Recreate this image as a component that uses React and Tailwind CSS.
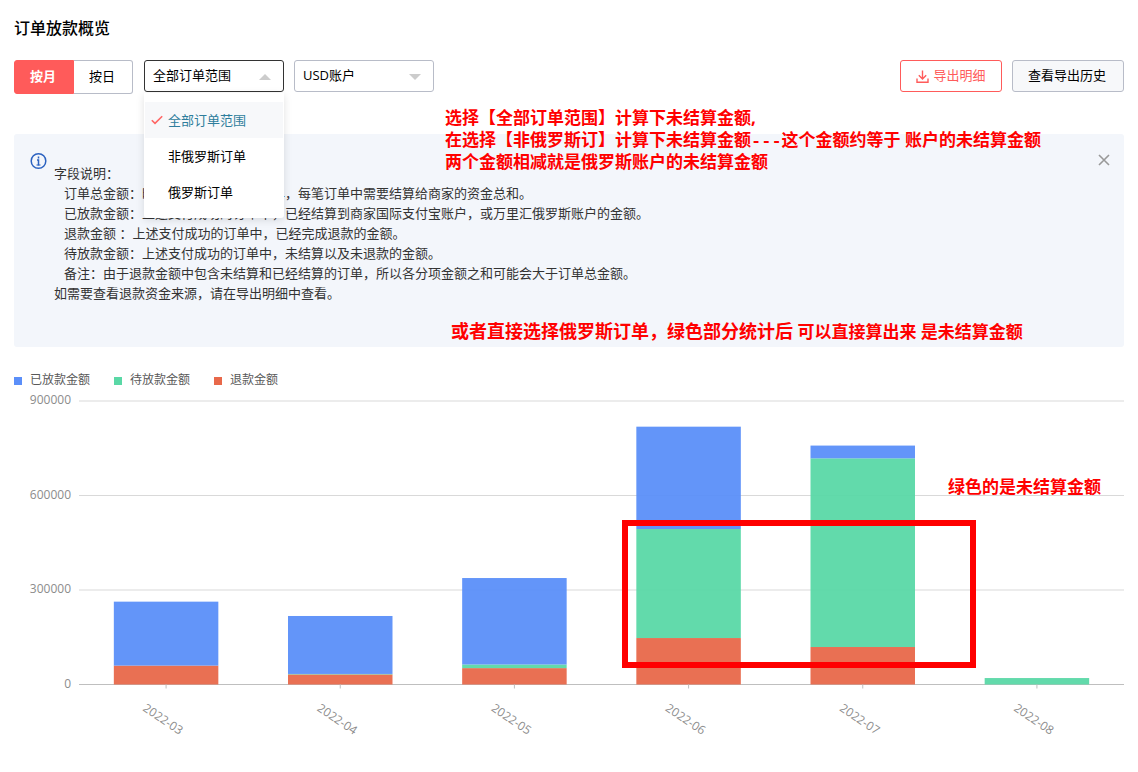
import { useState } from 'react';

const SERIES = [
    { key: 'paid', name: '已放款金额', color: '#5B8FF9' },
    { key: 'pending', name: '待放款金额', color: '#5AD8A6' },
    { key: 'refund', name: '退款金额', color: '#E8684A' },
];

const MONTHS = [
    { month: '2022-03', paid: 203000, pending: 0, refund: 60000 },
    { month: '2022-04', paid: 184000, pending: 1500, refund: 32000 },
    { month: '2022-05', paid: 274500, pending: 11500, refund: 52000 },
    { month: '2022-06', paid: 325000, pending: 346000, refund: 147500 },
    { month: '2022-07', paid: 40500, pending: 599000, refund: 119000 },
    { month: '2022-08', paid: 0, pending: 20500, refund: 0 },
];

const TICKS = [900000, 600000, 300000, 0];

const NOTES = [
    '订单总金额：时间段内支付成功的订单，每笔订单中需要结算给商家的资金总和。',
    '已放款金额：上述支付成功的订单中，已经结算到商家国际支付宝账户，或万里汇俄罗斯账户的金额。',
    '退款金额 ：上述支付成功的订单中，已经完成退款的金额。',
    '待放款金额：上述支付成功的订单中，未结算以及未退款的金额。',
    '备注：由于退款金额中包含未结算和已经结算的订单，所以各分项金额之和可能会大于订单总金额。',
];

const SCOPES = ['全部订单范围', '非俄罗斯订单', '俄罗斯订单'];

// Chart geometry: zero line at 292.5, 283.5px for 900000
const BASE_Y = 292.5;
const toHeight = (value) => (value / 900000) * 283.5;

function Caret({ up }) {
    return (
        <svg viewBox="0 0 12 6" className="pointer-events-none absolute right-[13px] top-3.5 h-1.5 w-3 fill-[#cccccc]" aria-hidden="true">
            <path d={up ? 'M0 6 6 0l6 6z' : 'M0 0h12L6 6z'} />
        </svg>
    );
}

function ScopeSelect() {
    const [scope, setScope] = useState(SCOPES[0]);

    return (
        <div className="relative w-[140px]">
            <select
                aria-label="订单范围"
                value={scope}
                onChange={(e) => setScope(e.target.value)}
                className="h-8 w-full appearance-none rounded-[3px] border border-[#333333] bg-white px-2 text-[13px] text-black"
            >
                {SCOPES.map((s) => <option key={s}>{s}</option>)}
            </select>
            <Caret up />
            <ul role="listbox" aria-label="订单范围" className="absolute left-0 top-full z-10 mt-px w-full rounded-b-[3px] bg-white px-px pb-2 pt-[9px] shadow-[0_2px_8px_rgba(0,0,0,0.12)]">
                {SCOPES.map((s) => {
                    const selected = s === scope;
                    return (
                        <li
                            key={s}
                            role="option"
                            aria-selected={selected}
                            onClick={() => setScope(s)}
                            className={`flex h-9 cursor-pointer items-center text-[13px] leading-9 ${selected ? 'bg-[#f7f8fa] text-[#2e7d9c]' : 'text-black'}`}
                        >
                            <span className="flex w-[23px] justify-center">
                                {selected && (
                                    <svg viewBox="0 0 12 10" className="h-2.5 w-3 fill-none stroke-[#ff6665]" aria-hidden="true">
                                        <path d="M0.8 5.2 4 8.4 11.2 1.2" strokeWidth="1.6" />
                                    </svg>
                                )}
                            </span>
                            {s}
                        </li>
                    );
                })}
            </ul>
        </div>
    );
}

function Toolbar() {
    const [unit, setUnit] = useState('月');

    return (
        <div className="mt-4 flex h-[34px] items-start text-[13px]">
            <div className="flex h-[34px]">
                {['月', '日'].map((u) => (
                    <button
                        key={u}
                        aria-pressed={unit === u}
                        onClick={() => setUnit(u)}
                        className={`w-[60px] border pr-0.5 first:rounded-l-[3px] last:w-[59px] last:rounded-r-[3px] ${unit === u ? 'border-[#ff5b5a] bg-[#ff5b5a] font-bold text-white' : 'border-[#b8bcc8] border-l-0 bg-white text-black'}`}
                    >
                        按{u}
                    </button>
                ))}
            </div>
            <div className="ml-[11px] flex gap-2.5">
                <ScopeSelect />
                <div className="relative w-[140px]">
                    <select aria-label="账户" className="h-8 w-full appearance-none rounded-[3px] border border-[#b8bcc8] bg-white px-2 text-[13px] text-black">
                        <option>USD账户</option>
                    </select>
                    <Caret />
                </div>
            </div>
            <div className="ml-auto flex gap-2.5">
                <button className="flex h-8 w-[102px] items-center justify-center gap-1 rounded-[3px] border border-[#ff5b5a] bg-white text-[#ff5b5a]">
                    <svg viewBox="0 0 13 13" className="h-[13px] w-[13px] fill-none stroke-current" aria-hidden="true">
                        <path d="M6.5 0.5v8.5M2.8 5.3l3.7 3.7 3.7-3.7M1 8.5v3.7h11V8.5" strokeWidth="1.4" />
                    </svg>
                    导出明细
                </button>
                <button className="h-8 w-[112px] rounded-[3px] border border-[#b8bcc8] bg-[#f7f8fa] pr-0.5 text-black">查看导出历史</button>
            </div>
        </div>
    );
}

function NoticePanel() {
    return (
        <section className="relative mt-10 flex items-start rounded-[3px] bg-[#f3f6fb] px-4 pb-11 pt-[18px] text-[13px] leading-5 text-[#333333]">
            <svg viewBox="0 0 18 18" className="h-[18px] w-[18px] shrink-0 fill-none stroke-[#2b62c0]" aria-hidden="true">
                <circle cx="8.5" cy="9" r="7.3" strokeWidth="1.5" />
                <path d="M8.5 4.5v2M7 8h1.5v5.5" strokeWidth="1.5" />
                <path d="M6.5 13h4" />
            </svg>
            <div className="ml-1.5 mt-[11px] flex-1">
                <p>字段说明：</p>
                {NOTES.map((note) => <p key={note} className="pl-2.5">{note}</p>)}
                <p>如需要查看退款资金来源，请在导出明细中查看。</p>
            </div>
            <button aria-label="关闭" className="-mr-1 p-0.5">
                <svg viewBox="0 0 12 12" className="h-3 w-3 stroke-[#999999]" aria-hidden="true">
                    <path d="M1 1 11 11M11 1 1 11" strokeWidth="1.6" />
                </svg>
            </button>

            {/* Remarks over the panel */}
            <p className="absolute -top-[27px] left-[431px] whitespace-nowrap text-[17px] font-bold leading-[22px] text-[#ff0000]">
                选择【全部订单范围】计算下未结算金额,<br />
                在选择【非俄罗斯订】计算下未结算金额<span className="font-['Liberation_Mono',monospace] leading-none">---</span>这个金额约等于 账户的未结算金额<br />
                两个金额相减就是俄罗斯账户的未结算金额
            </p>
            <p className="absolute bottom-1 left-[437px] whitespace-nowrap text-[17px] font-bold leading-[22px] text-[#ff0000]">
                <span className="text-[18px]">或者直接选择俄罗斯订单，绿色部分统计后</span> 可以直接算出来 是未结算金额
            </p>
        </section>
    );
}

function Bar({ item }) {
    let y = BASE_Y;
    return [...SERIES].reverse().map(({ key, color }) => {
        const height = toHeight(item[key]);
        y -= height;
        return <rect key={key} x="-30%" y={y} width="60%" height={height} fill={color} fillOpacity="0.95" />;
    });
}

function PayoutChart() {
    const band = 100 / MONTHS.length;

    return (
        <section className="mt-[25px]">
            <ul className="flex h-4 gap-6 text-[12px] leading-4 text-[#595959]">
                {SERIES.map((s) => (
                    <li key={s.key} className="flex items-center gap-2">
                        <span className="mt-0.5 h-2 w-2" style={{ backgroundColor: s.color }} />
                        {s.name}
                    </li>
                ))}
            </ul>
            <div className="relative mt-1 flex h-[360px]">
                <svg className="h-full w-[65px] shrink-0 fill-[#8c8c8c] text-[12px]">
                    {TICKS.map((t) => (
                        <text key={t} x="57" y={BASE_Y - toHeight(t) + 3} textAnchor="end">{t}</text>
                    ))}
                </svg>
                <svg className="h-full min-w-0 flex-1 overflow-visible text-[12px]">
                    {TICKS.map((t) => (
                        <line key={t} x1="0" x2="100%" y1={BASE_Y - toHeight(t)} y2={BASE_Y - toHeight(t)} stroke={t ? '#d9d9d9' : '#bfbfbf'} />
                    ))}
                    {MONTHS.map((item, i) => (
                        <svg key={item.month} x={`${band * (i + 0.5)}%`} width={`${band}%`} height="100%" className="overflow-visible">
                            <Bar item={item} />
                            <line x1="0" x2="0" y1={BASE_Y} y2={BASE_Y + 4} stroke="#bfbfbf" />
                            <text transform="translate(-24 318) rotate(34)" fill="#8c8c8c">{item.month}</text>
                        </svg>
                    ))}
                </svg>
                <div className="pointer-events-none absolute left-[608px] top-32 h-[148px] w-[354px] border-6 border-[#ff0000]" />
                <p className="absolute right-[23px] top-[84px] whitespace-nowrap text-[17px] font-bold leading-[22px] text-[#ff0000]">绿色的是未结算金额</p>
            </div>
        </section>
    );
}

export default function App() {
    return (
        <main className="bg-white px-3.5 pb-5 pt-4 font-['Open_Sans','Noto_Sans_CJK_SC',sans-serif]">
            <h1 className="h-7 text-[16px] font-medium leading-6 text-black">订单放款概览</h1>
            <Toolbar />
            <NoticePanel />
            <PayoutChart />
        </main>
    );
}
